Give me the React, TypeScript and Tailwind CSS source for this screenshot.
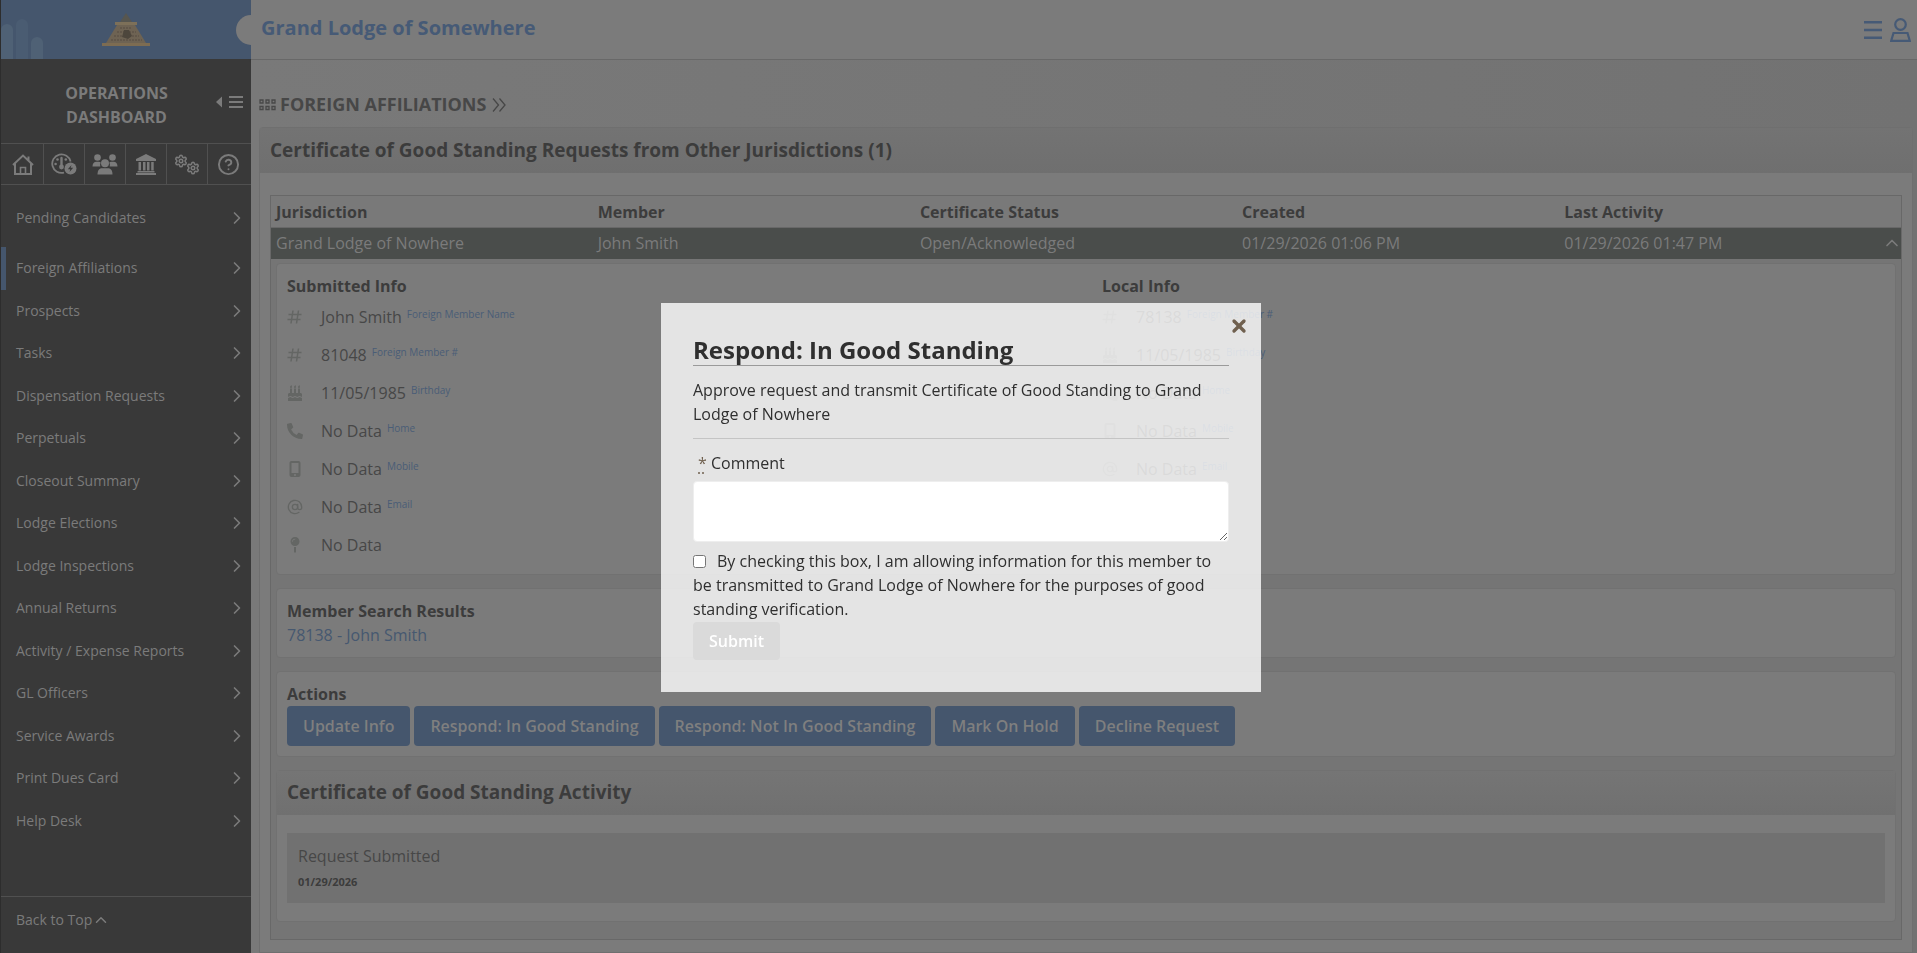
import React, { useState } from "react";
import { ChevronRight, ChevronUp, CircleHelp, Settings, X } from "lucide-react";
import { FaBirthdayCake, FaPhoneAlt, FaMapPin } from "react-icons/fa";
import { FaMobileScreenButton } from "react-icons/fa6";
import { LuAtSign } from "react-icons/lu";

type InfoRow = { icon: React.ElementType; value: string; label?: string };

function HashIcon({ className }: { className?: string }) {
  return (
    <svg viewBox="0 0 16 16" className={className} fill="none" stroke="currentColor" strokeWidth="1.500">
      <path d="M1.500 5.500h13M.5 10.500h13M6 1.500 4 14.500M11.500 1.500l-2 13" />
    </svg>
  );
}

const menu = [
  "Foreign Affiliations",
  "Prospects",
  "Tasks",
  "Dispensation Requests",
  "Perpetuals",
  "Closeout Summary",
  "Lodge Elections",
  "Lodge Inspections",
  "Annual Returns",
  "Activity / Expense Reports",
  "GL Officers",
  "Service Awards",
  "Print Dues Card",
  "Help Desk",
];

const submitted: InfoRow[] = [
  { icon: HashIcon, value: "John Smith", label: "Foreign Member Name" },
  { icon: HashIcon, value: "81048", label: "Foreign Member #" },
  { icon: FaBirthdayCake, value: "11/05/1985", label: "Birthday" },
  { icon: FaPhoneAlt, value: "No Data", label: "Home" },
  { icon: FaMobileScreenButton, value: "No Data", label: "Mobile" },
  { icon: LuAtSign, value: "No Data", label: "Email" },
  { icon: FaMapPin, value: "No Data" },
];

const local: InfoRow[] = [
  { icon: HashIcon, value: "78138", label: "Foreign Member #" },
  { icon: FaBirthdayCake, value: "11/05/1985", label: "Birthday" },
  { icon: FaPhoneAlt, value: "No Data", label: "Home" },
  { icon: FaMobileScreenButton, value: "No Data", label: "Mobile" },
  { icon: LuAtSign, value: "No Data", label: "Email" },
];

const columns = ["Jurisdiction", "Member", "Certificate Status", "Created", "Last Activity"];
const request = ["Grand Lodge of Nowhere", "John Smith", "Open/Acknowledged", "01/29/2026 01:06 PM", "01/29/2026 01:47 PM"];
const actions = ["Update Info", "Respond: In Good Standing", "Respond: Not In Good Standing", "Mark On Hold", "Decline Request"];

function HomeIcon() {
  return (
    <svg viewBox="0 0 22 21" className="w-[22px] h-[21px]" fill="none" stroke="currentColor" strokeWidth="2">
      <path d="M1 11 11 1.6 21 11M3 9.5V20h16V9.5M16.5 2.5v4" />
      <path d="M8.5 20v-6.5h5V20" strokeWidth="1.6" />
    </svg>
  );
}

function GaugeIcon() {
  return (
    <svg viewBox="0 0 26 22" className="w-[26px] h-[22px]" fill="none" stroke="currentColor">
      <path d="M13 19.6A9.3 9.3 0 1 1 19.6 8.5" strokeWidth="1.8" />
      <path d="M10.5 5v9" strokeWidth="2.4" strokeLinecap="round" />
      <circle cx="10.5" cy="14" r="2.4" fill="currentColor" stroke="none" />
      <g fill="currentColor" stroke="none">
        <circle cx="6.5" cy="6.5" r="1.3" />
        <circle cx="14.8" cy="6.5" r="1.3" />
        <circle cx="4.6" cy="11" r="1.3" />
      </g>
      <circle cx="19.5" cy="15.5" r="6" fill="currentColor" stroke="none" />
      <path d="M20.5 12 16.8 16.2h2.5L18.5 19l3.7-4.2h-2.5z" fill="#393939" stroke="none" />
    </svg>
  );
}

function GroupIcon() {
  return (
    <svg viewBox="0 0 26 21" className="w-[26px] h-[21px]" fill="currentColor">
      <circle cx="5.5" cy="3.5" r="3.3" />
      <circle cx="20.5" cy="3.5" r="3.3" />
      <path d="M.5 12.5c0-3 1.5-4.8 4-4.8h2.2c1 0 1.6.3 2 .8a5 5 0 0 0-.4 4zM25.5 12.5c0-3-1.5-4.8-4-4.8h-2.2c-1 0-1.6.3-2 .8a5 5 0 0 1 .4 4z" />
      <circle cx="13" cy="9.3" r="4" />
      <path d="M5.5 20.5c0-4 1.5-6.3 4.5-6.3h6c3 0 4.5 2.3 4.5 6.3z" />
    </svg>
  );
}

function BankIcon() {
  return (
    <svg viewBox="0 0 22 21" className="w-[22px] h-[21px]" fill="currentColor">
      <path d="M11 0 21 5v2H1V5zM3.5 8H6v8.5H3.5zM8 8h2.5v8.5H8zM12 8h2.5v8.5H12zM16.2 8h2.5v8.5h-2.5zM2.5 17h17v1.5h-17zM1 19h20v2H1z" />
    </svg>
  );
}

function GearsIcon() {
  return (
    <svg viewBox="0 0 26 21" className="w-[26px] h-[21px]">
      <Settings x={0} y={0} width={14} height={14} strokeWidth={2.6} />
      <Settings x={12} y={7} width={14} height={14} strokeWidth={2.6} />
    </svg>
  );
}

function PyramidLogo() {
  return (
    <svg viewBox="0 0 48 34" className="w-12 h-[34px]">
      <path d="M24 0 30 9H18z" fill="#57564f" />
      <path d="M13 9h22v3H13z" fill="#7d7059" />
      <path d="M15 12h18l11 18H4z" fill="#6e6353" />
      <path d="M18 15h12M15 19h19M12 23h25M9 27h31" stroke="#564d42" strokeDasharray="2 1" />
      <path d="M20 24l2-7h5l3 6-4 3z" fill="#4d463c" />
      <path d="M0 30h48v3H0z" fill="#7d6c52" />
    </svg>
  );
}

const tools = [
  { name: "Home", icon: HomeIcon },
  { name: "Dashboard", icon: GaugeIcon },
  { name: "Members", icon: GroupIcon },
  { name: "Lodges", icon: BankIcon },
  { name: "Settings", icon: GearsIcon },
  { name: "Help", icon: () => <CircleHelp size={23} strokeWidth={2} /> },
];

function MenuItem({ label, active }: { label: string; active?: boolean }) {
  return (
    <li className="flex flex-1">
      <a
        href="#"
        className={`flex flex-1 items-center justify-between border-l-[5px] pl-[10px] pr-1 ${active ? "border-[#45566d]" : "border-transparent"}`}
      >
        {label}
        <ChevronRight size={20} strokeWidth={2} />
      </a>
    </li>
  );
}

function Sidebar() {
  return (
    <aside className="flex w-[251px] shrink-0 flex-col border-l border-[#2d2d2d] bg-[#393939] text-sm text-[#7b7b7b]">
      <div className="relative flex h-[59px] shrink-0 items-center justify-center overflow-hidden bg-[#45566d]">
        <div className="absolute bottom-0 left-0 flex items-end gap-[3px]">
          <span className="h-[35px] w-3 rounded-t-md bg-[#4f6175]" />
          <span className="h-10 w-3 rounded-t-md bg-[#4a5c72]" />
          <span className="h-[22px] w-3 rounded-t-md bg-[#4f6175]" />
        </div>
        <PyramidLogo />
        <span className="absolute -right-[15px] top-[15px] size-[30px] rounded-full bg-[#7b7b7b]" />
      </div>

      <div className="flex h-[84px] shrink-0 items-center pt-2">
        <h1 className="flex-1 pl-4 text-center text-base font-bold">
          OPERATIONS
          <br />
          DASHBOARD
        </h1>
        <button aria-label="Collapse menu" className="pb-[6px] pr-2">
          <svg viewBox="0 0 27 12" className="h-3 w-[27px]" fill="currentColor">
            <path d="M6 0.5v11L0 6z" />
            <path d="M13 0h14v2H13zM13 5h14v2H13zM13 10h14v2H13z" />
          </svg>
        </button>
      </div>

      <div className="grid h-[42px] shrink-0 grid-cols-6 divide-x divide-[#505050] border-y border-[#505050] px-[2px]">
        {tools.map(({ name, icon: Icon }) => (
          <button key={name} aria-label={name} className="flex items-center justify-center">
            <Icon />
          </button>
        ))}
      </div>

      <nav className="flex flex-1 flex-col pb-[54px] pt-3">
        <ul className="flex h-[42px] flex-col">
          <MenuItem label="Pending Candidates" />
        </ul>
        <ul className="mt-2 flex flex-1 flex-col">
          {menu.map((label, i) => (
            <MenuItem key={label} label={label} active={i === 0} />
          ))}
        </ul>
      </nav>

      <div className="h-[57px] shrink-0 border-t border-[#505050] pl-[15px] pt-[13px]">
        <a href="#" className="inline-flex items-center">
          Back to Top
          <ChevronUp size={18} strokeWidth={2} />
        </a>
      </div>
    </aside>
  );
}

function InfoList({ title, rows }: { title: string; rows: InfoRow[] }) {
  return (
    <div>
      <h3 className="font-bold text-[#3c3c3c]">{title}</h3>
      <ul>
        {rows.map(({ icon: Icon, value, label }, i) => (
          <li key={i} className="flex h-[38px] items-center">
            <span className="w-[34px] text-[#646664]">
              <Icon className="size-4" />
            </span>
            <span>{value}</span>
            {label && <span className="mb-1 ml-[5px] text-[10px] text-[#4a5d77]">{label}</span>}
          </li>
        ))}
      </ul>
    </div>
  );
}

function Card({ children }: { children: React.ReactNode }) {
  return <section className="rounded-sm border border-[#717171] bg-[#7b7b7b] p-[10px]">{children}</section>;
}

function RequestTable() {
  return (
    <table className="w-full table-fixed border border-[#686868] bg-[#757575] text-left">
      <thead>
        <tr className="h-8 border-b border-[#686868] bg-[#797979] text-[#3c3c3c]">
          {columns.map((c) => (
            <th key={c} className="px-[5px] py-0 font-bold">{c}</th>
          ))}
          <th className="w-5" />
        </tr>
      </thead>
      <tbody>
        <tr className="h-[31px] bg-[#4a4d4b] text-[#7b7b7b]">
          {request.map((c) => (
            <td key={c} className="px-[5px] py-0">{c}</td>
          ))}
          <td>
            <button aria-label="Collapse request" className="block">
              <ChevronUp size={20} strokeWidth={2} />
            </button>
          </td>
        </tr>
        <tr>
          <td colSpan={6} className="px-[5px] pb-[17px] pt-1">
            <div className="flex flex-col gap-[13px]">
              <Card>
                <div className="grid grid-cols-2 gap-8">
                  <InfoList title="Submitted Info" rows={submitted} />
                  <InfoList title="Local Info" rows={local} />
                </div>
              </Card>

              <Card>
                <h3 className="font-bold text-[#3c3c3c]">Member Search Results</h3>
                <a href="#" className="block text-[#465870]">78138 - John Smith</a>
              </Card>

              <Card>
                <h3 className="font-bold text-[#3c3c3c]">Actions</h3>
                <div className="flex gap-1">
                  {actions.map((a) => (
                    <button key={a} className="h-10 rounded-sm bg-[#45566d] px-4 font-semibold text-[#7f7f7f]">
                      {a}
                    </button>
                  ))}
                </div>
              </Card>

              <section className="rounded-sm border border-[#717171] bg-[#7b7b7b]">
                <h2 className="flex h-11 items-center bg-linear-to-b from-[#757575] to-[#707070] px-[10px] text-[19px] font-bold text-[#3c3c3c]">
                  Certificate of Good Standing Activity
                </h2>
                <div className="px-[10px] py-[18px]">
                  <div className="h-[70px] bg-[#717171] px-[11px] py-[11px]">
                    <p>Request Submitted</p>
                    <p className="text-[11px] font-bold leading-7 text-[#3c3c3c]">01/29/2026</p>
                  </div>
                </div>
              </section>
            </div>
          </td>
        </tr>
      </tbody>
    </table>
  );
}

function RespondDialog() {
  const [comment, setComment] = useState("");
  const [agreed, setAgreed] = useState(false);

  return (
    <div className="fixed inset-0 flex items-center justify-center pl-[5px] pt-[42px]">
      <div role="dialog" aria-labelledby="respond-title" className="relative w-[600px] bg-white/80 p-8 text-[#2f2f2f]">
        <button aria-label="Close" className="absolute right-3 top-[13px] text-[#70604f]">
          <X size={20} strokeWidth={4} />
        </button>
        <h2 id="respond-title" className="border-b border-[#9a9a9a] text-2xl font-bold leading-[30px]">
          Respond: In Good Standing
        </h2>
        <p className="mt-3">
          Approve request and transmit Certificate of Good Standing to Grand Lodge of Nowhere
        </p>
        <hr className="my-3 border-t border-[#c4c4c4]" />
        <label htmlFor="comment" className="block pl-[5px]">
          <abbr title="required" className="text-[#70604f] underline decoration-dotted underline-offset-4">*</abbr> Comment
        </label>
        <textarea
          id="comment"
          value={comment}
          onChange={(e) => setComment(e.target.value)}
          className="mt-[6px] block h-[61px] w-full rounded-sm border border-[#eee] bg-white p-2"
        />
        <label className="mt-[7px] block">
          <input type="checkbox" checked={agreed} onChange={(e) => setAgreed(e.target.checked)} className="mr-[11px] size-[13px] align-[-1px]" />
          By checking this box, I am allowing information for this member to be transmitted to Grand Lodge of Nowhere for the purposes of good standing verification.
        </label>
        <button disabled className="mt-px block h-[38px] rounded-sm bg-[#dadada] px-4 font-semibold text-white">
          Submit
        </button>
      </div>
    </div>
  );
}

export default function App() {
  return (
    <div className="flex h-screen overflow-hidden bg-[#757575] font-['Open_Sans',sans-serif] text-base text-[#474747]">
      <Sidebar />

      <div className="flex min-w-0 flex-1 flex-col">
        <header className="flex h-[60px] shrink-0 items-center justify-between border-b border-[#686868] bg-[#7b7b7b] pl-[10px] pr-[6px] text-[#465a76] shadow-sm">
          <span className="pb-1 text-xl font-bold">Grand Lodge of Somewhere</span>
          <div className="flex items-center gap-2">
            <button aria-label="Menu">
              <svg viewBox="0 0 18 18" className="size-[18px]" fill="currentColor">
                <path d="M0 0h18v2.4H0zM0 7.8h18v2.4H0zM0 15.6h18V18H0z" />
              </svg>
            </button>
            <button aria-label="Account">
              <svg viewBox="0 0 21 24" className="h-6 w-[21px]" fill="none" stroke="currentColor" strokeWidth="2.2">
                <circle cx="10.5" cy="6.5" r="5.3" />
                <path d="M3.5 15h14L19.8 22.8H1.2z" />
              </svg>
            </button>
          </div>
        </header>

        <main className="flex flex-1 flex-col bg-linear-to-r from-[#797979] to-[#727272] pl-2 pr-1 pt-8">
          <div className="flex h-[35px] items-start gap-1">
            <svg viewBox="0 0 17 12" className="mt-[7px] h-3 w-[17px]" fill="none" stroke="#484848" strokeWidth="1.3">
              <path d="M1 1h3v3H1zM7 1h3v3H7zM13 1h3v3h-3zM1 7.5h3v3H1zM7 7.5h3v3H7zM13 7.5h3v3h-3z" />
            </svg>
            <h2 className="text-lg font-bold leading-6 text-[#474747]">FOREIGN AFFILIATIONS</h2>
            <svg viewBox="0 0 14 14" className="ml-[2px] mt-[6px] size-[14px]" fill="none" stroke="currentColor" strokeWidth="1.3">
              <path d="M1 .5 6.5 7 1 13.5M7.5.5 13 7l-5.5 6.5" />
            </svg>
          </div>

          <section className="flex-1 rounded-t-sm border border-[#6f6f6f] bg-[#7b7b7b]">
            <h2 className="flex h-[45px] items-center bg-linear-to-b from-[#737373] to-[#6f6f6f] px-[10px] text-[19px] font-bold text-[#3c3c3c]">
              Certificate of Good Standing Requests from Other Jurisdictions (1)
            </h2>
            <div className="px-[10px] pt-[22px]">
              <RequestTable />
            </div>
          </section>
        </main>
      </div>

      <RespondDialog />
    </div>
  );
}
